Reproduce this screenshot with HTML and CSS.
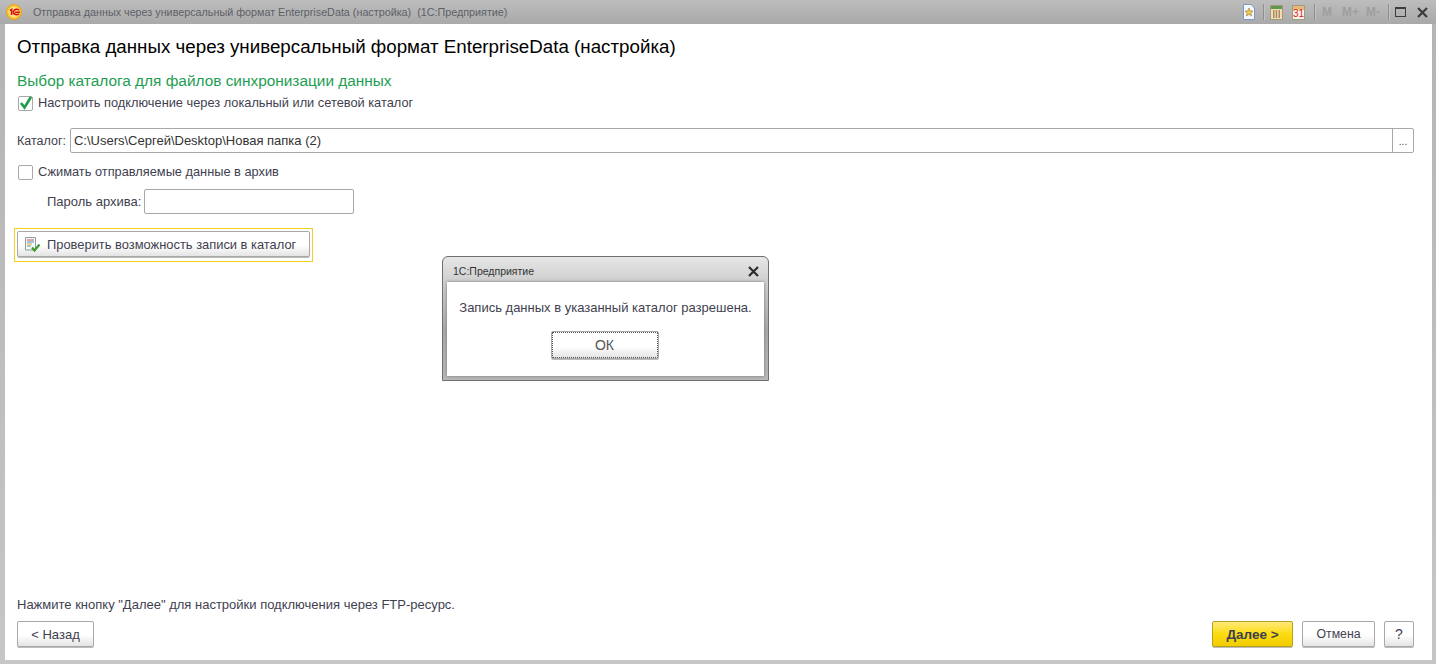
FILE: index.html
```html
<!DOCTYPE html>
<html lang="ru">
<head>
<meta charset="utf-8">
<title>Отправка данных</title>
<link rel="stylesheet" href="styles.css">
</head>
<body>
<div class="window">
  <header class="titlebar">
    <svg class="logo" width="18" height="18" viewBox="0 0 18 18"><circle cx="9" cy="9" r="7.500" fill="#f7c52e" stroke="#e9a21c"/><circle cx="9" cy="9" r="5.600" fill="#fbe27a"/><path d="M5 7.500 6.600 6.400V12M14 7.200C12.600 5.800 9 6 8.400 8.600 8 11 11 12.600 14 11M10 9.200H15" fill="none" stroke="#d5121a" stroke-width="1.600"/></svg>
    <span class="wintitle">Отправка данных через универсальный формат EnterpriseData (настройка)&nbsp; (1С:Предприятие)</span>
    <div class="tools">
      <svg class="tool star" width="14" height="16" viewBox="0 0 14 16"><path d="M1.500.5H9L12.500 4V15.500H1.500Z" fill="#f4f7fc" stroke="#7d97c0"/><path d="M7 4 8.200 7H11L8.800 9 9.600 12 7 10.300 4.400 12 5.200 9 3 7H5.800Z" fill="#f2c94f" stroke="#a5853a" stroke-width=".7"/></svg>
      <i class="sep"></i>
      <svg class="tool" width="13" height="15" viewBox="0 0 13 15"><rect x=".5" y=".5" width="12" height="14" fill="#f5dcb0" stroke="#a39a80"/><rect x="1" y="1" width="11" height="3" fill="#5b9a4a"/><path d="M3 6h1.500M5.700 6h1.500M8.500 6H10M3 8h1.500M5.700 8h1.500M8.500 8H10M3 10h1.500M5.700 10h1.500M8.500 10H10M3 12h1.500M5.700 12h1.500M8.500 12H10" stroke="#5b3a22"/></svg>
      <span class="cal"><b>31</b></span>
      <i class="sep sep-m"></i>
      <span class="mem m1">M</span><span class="mem m2">M+</span><span class="mem m3">M-</span>
      <i class="sep sep-w"></i>
      <span class="maxbox"></span>
      <svg class="close" width="11" height="11" viewBox="0 0 11 11"><path d="M1 1 10 10M10 1 1 10" stroke="#3c3c3c" stroke-width="2.200"/></svg>
    </div>
  </header>
  <main class="content">
    <h1 class="heading">Отправка данных через универсальный формат EnterpriseData (настройка)</h1>
    <h2 class="subheading">Выбор каталога для файлов синхронизации данных</h2>
    <label class="check-row first">
      <span class="box"><svg width="15" height="15" viewBox="0 0 15 15"><path d="M3 7 6.500 11.500 13 1" fill="none" stroke="#1f9a4a" stroke-width="2.600"/></svg></span>
      Настроить подключение через локальный или сетевой каталог
    </label>
    <div class="field-row">
      <span class="label label-small">Каталог:</span>
      <div class="path"><span class="path-value">C:\Users\Сергей\Desktop\Новая папка (2)</span><span class="path-btn">...</span></div>
    </div>
    <label class="check-row second"><span class="box"></span>Сжимать отправляемые данные в архив</label>
    <div class="pass-row">
      <span class="label">Пароль архива:</span>
      <span class="pass"></span>
    </div>
    <div class="focus-ring">
      <button class="btn check-btn">
        <svg width="17" height="17" viewBox="0 0 17 17"><path d="M1.500 1.500H11.500V14H1.500Z" fill="#f8f9fa" stroke="#8f9aa5"/><path d="M3 4H10" stroke="#c9574a"/><path d="M3 6H10" stroke="#4a8fc9"/><path d="M3 8H8" stroke="#d6a73d"/><path d="M3 10H7" stroke="#6a9a5a"/><path d="M8 11.500 10.500 14.500 15.500 8.500" fill="none" stroke="#3f9c2a" stroke-width="2.200"/></svg>
        Проверить возможность записи в каталог
      </button>
    </div>
    <p class="hint">Нажмите кнопку "Далее" для настройки подключения через FTP-ресурс.</p>
    <footer class="actions">
      <button class="btn back">&lt; Назад</button>
      <button class="btn next">Далее &gt;</button>
      <button class="btn cancel">Отмена</button>
      <button class="btn help">?</button>
    </footer>
  </main>
</div>
<div class="dialog">
  <div class="dialog-head"><span>1С:Предприятие</span><svg width="11" height="11" viewBox="0 0 11 11"><path d="M1 1 10 10M10 1 1 10" stroke="#2c2c2c" stroke-width="2.200"/></svg></div>
  <div class="dialog-body">
    <p class="message">Запись данных в указанный каталог разрешена.</p>
    <button class="btn ok">ОК</button>
  </div>
</div>
</body>
</html>
```
FILE: styles.css
```css
* { box-sizing: border-box; }
html, body { margin: 0; height: 100%; overflow: hidden; }
body { font: 13px "Liberation Sans", Arial, sans-serif; color: #3f3f50; background: #fff; position: relative; }
.window { width: 1436px; height: 664px; display: flex; flex-direction: column; background: linear-gradient(#b4b4b4, #c6c6c6); padding: 0 4px 4px 5px; }
.titlebar { height: 24px; display: flex; align-items: center; flex: none; margin: 0 -4px 0 -5px; padding: 0 0 0 5px; background: linear-gradient(#bdbdbd, #a9a9a9); }
.logo { flex: none; margin-right: 10px; }
.wintitle { font-size: 10.77px; color: #5d6068; white-space: nowrap; }
.tools { margin-left: auto; display: flex; align-items: center; height: 24px; padding-right: 8px; }
.tool { flex: none; }
.star { margin-right: 7px; }
.sep { width: 1px; height: 16px; background: #8f8f8f; border-right: 1px solid #c2c2c2; box-sizing: content-box; margin-right: 5px; }
.cal { width: 13px; height: 15px; margin: 0 9px; background: linear-gradient(#e8b878 0 4px, #f6f3ea 4px); border: 1px solid #a39a80; display: flex; align-items: flex-end; justify-content: center; }
.cal b { font: 10px/10px "Liberation Sans", sans-serif; color: #d9261c; }
.sep-m { margin-right: 6px; }
.mem { font-weight: 700; font-size: 12px; color: #9e9e9e; }
.m1 { width: 20px; }
.m2 { width: 24px; }
.m3 { width: 22px; }
.maxbox { width: 11px; height: 10px; border: 1px solid #3c3c3c; border-top-width: 2px; margin-right: 11px; }
.close { flex: none; }
.content { flex: 1; background: #fff; display: flex; flex-direction: column; padding: 0 18px 13px 12px; min-height: 0; }
.heading { margin: 13px 0 0; font-size: 18.75px; line-height: 20px; font-weight: 400; color: #000; }
.subheading { margin: 15px 0 0; font-size: 15.4px; line-height: 18px; font-weight: 400; color: #1e9e53; }
.check-row { display: flex; align-items: center; gap: 5px; font-size: 12.8px; line-height: 16px; padding-left: 1px; }
.check-row.first { margin-top: 5px; }
.check-row.second { margin-top: 11px; }
.box { width: 15px; height: 15px; flex: none; border: 1px solid #a8a8a8; border-radius: 2px; background: #fff; display: block; }
.box svg { display: block; margin: -1px; }
.field-row { display: flex; align-items: center; gap: 4px; margin-top: 17px; }
.label { white-space: nowrap; }
.label-small { font-size: 12.5px; }
.path { flex: 1; height: 25px; display: flex; border: 1px solid #a8a8a8; border-radius: 2px; }
.path-value { flex: 1; line-height: 23px; padding-left: 3px; color: #333; }
.path-btn { width: 21px; border-left: 1px solid #a8a8a8; text-align: center; line-height: 26px; font-size: 10px; }
.pass-row { display: flex; align-items: center; gap: 3px; margin-top: 9px; padding-left: 30px; }
.pass { width: 210px; height: 25px; border: 1px solid #a8a8a8; border-radius: 2px; }
.focus-ring { align-self: flex-start; margin: 14px 0 0 -3px; padding: 2px 2px 4px; border: 1px solid #f5cf1e; }
.btn { font: 13px "Liberation Sans", sans-serif; color: #3f3f50; background: linear-gradient(#fff 55%, #e4e4e4); border: 1px solid #a8a8a8; border-radius: 2px; padding: 0; height: 26px; box-shadow: 0 1px 0 #bcbcbc; display: flex; align-items: center; justify-content: center; }
.check-btn { width: 293px; justify-content: flex-start; gap: 6px; padding-left: 6px; font-size: 12.9px; }
.hint { margin: auto 0 0; line-height: 14px; }
.actions { display: flex; margin-top: 9px; gap: 9px; }
.back { width: 77px; margin-right: auto; }
.next { width: 81px; font-size: 13.5px; font-weight: 700; background: linear-gradient(#ffe97a, #fbdc10 50%, #f2cc00); border-color: #b5a020; }
.cancel { width: 73px; font-size: 12.3px; }
.help { width: 30px; font-size: 14px; }
.dialog { position: absolute; left: 442px; top: 256px; width: 327px; height: 125px; padding: 0 4px 4px; border: 1px solid #6f6f6f; border-radius: 6px 6px 0 0; background: linear-gradient(#e6e6e6, #cfcfcf 20%, #a9a9a9 60%, #b8b8b8); display: flex; flex-direction: column; }
.dialog-head { height: 25px; display: flex; align-items: center; justify-content: space-between; padding: 3px 5px 0 6px; font-size: 10.5px; color: #333; flex: none; }
.dialog-body { flex: 1; background: #fff; display: flex; flex-direction: column; align-items: center; box-shadow: 0 0 3px #777; }
.message { margin: 18px 0 0; line-height: 16px; }
.ok { width: 108px; height: 28px; margin: 15px 0 0 -2px; font-size: 14px; color: #555; outline: 1px dotted #555; outline-offset: -2px; }
```
